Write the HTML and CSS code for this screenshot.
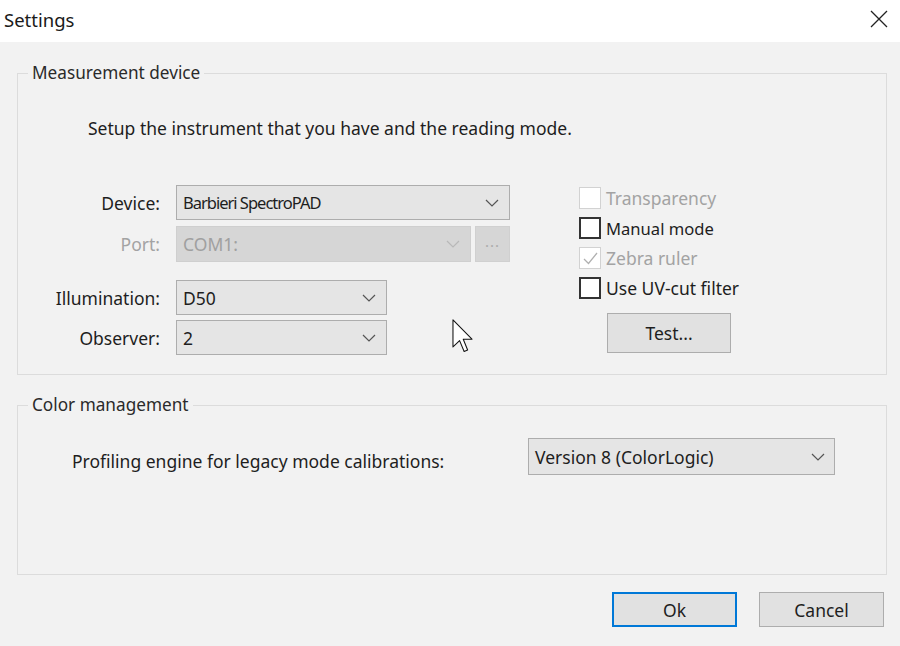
FILE: index.html
```html
<!DOCTYPE html>
<html lang="en">

<head>
  <meta charset="UTF-8" />
  <meta name="viewport" content="width=device-width, initial-scale=1.0" />
  <title>Settings</title>
  <link rel="stylesheet" href="styles.css">
</head>

<body>

  <div class="titlebar">
    <span class="title">Settings</span>
    <svg class="close" width="20" height="20" viewBox="0 0 20 20">
      <path d="M2 2 L18 18 M18 2 L2 18" stroke="#222" stroke-width="1.3" fill="none" />
    </svg>
  </div>

  <div class="content">

    <!-- Measurement device -->
    <fieldset class="group measure">
      <legend>Measurement device</legend>
      <p class="intro">Setup the instrument that you have and the reading mode.</p>

      <div class="device-row">
        <div class="form-grid">
          <label class="lbl">Device:</label>
          <div class="combo w-wide">
            <span class="narrow">Barbieri SpectroPAD</span>
            <svg class="chev" width="14" height="8" viewBox="0 0 14 8"><path d="M1 1 L7 7 L13 1" /></svg>
          </div>

          <label class="lbl disabled port-gap">Port:</label>
          <div class="port-row port-gap">
            <div class="combo w-port off">
              <span>COM1:</span>
              <svg class="chev" width="14" height="8" viewBox="0 0 14 8"><path d="M1 1 L7 7 L13 1" /></svg>
            </div>
            <button class="dots" disabled>...</button>
          </div>

          <label class="lbl gap-top">Illumination:</label>
          <div class="combo w-short gap-top">
            <span>D50</span>
            <svg class="chev" width="14" height="8" viewBox="0 0 14 8"><path d="M1 1 L7 7 L13 1" /></svg>
          </div>

          <label class="lbl tight">Observer:</label>
          <div class="combo w-short tight">
            <span>2</span>
            <svg class="chev" width="14" height="8" viewBox="0 0 14 8"><path d="M1 1 L7 7 L13 1" /></svg>
          </div>
        </div>

        <div class="options">
          <div class="check disabled"><span class="box"></span>Transparency</div>
          <div class="check"><span class="box"></span><span class="slim">Manual mode</span></div>
          <div class="check disabled">
            <span class="box">
              <svg width="19" height="19" viewBox="0 0 19 19"><path d="M3 10 L7.5 14.5 L16 4" stroke="#b0b0b0" stroke-width="1.3" fill="none" /></svg>
            </span>Zebra ruler
          </div>
          <div class="check"><span class="box"></span>Use UV-cut filter</div>
          <button class="btn test">Test...</button>
        </div>
      </div>

      <!-- mouse pointer over the dialog -->
      <svg class="cursor" width="22" height="34" viewBox="0 0 12.5 19.5">
        <path d="M0.5 0.5 L0.5 16 L4.3 12.4 L6.9 18.6 L8.9 17.8 L6.4 11.6 L11.4 11.6 Z"
          fill="#fff" stroke="#111" stroke-width="0.6" stroke-linejoin="round" />
      </svg>
    </fieldset>

    <!-- Color management -->
    <fieldset class="group color">
      <legend>Color management</legend>
      <div class="profile-row">
        <label class="lbl-profile">Profiling engine for legacy mode calibrations:</label>
        <div class="combo w-engine">
          <span>Version 8 (ColorLogic)</span>
          <svg class="chev" width="14" height="8" viewBox="0 0 14 8"><path d="M1 1 L7 7 L13 1" /></svg>
        </div>
      </div>
    </fieldset>

    <div class="actions">
      <button class="btn ok">Ok</button>
      <button class="btn">Cancel</button>
    </div>

  </div>

</body>

</html>
```

FILE: styles.css
```css
* {
  box-sizing: border-box;
}

body {
  margin: 0;
  font-family: "Noto Sans", "Open Sans", sans-serif;
  font-size: 17.5px;
  color: #1e1e1e;
  background-color: #f2f2f2;
  width: 900px;
  height: 646px;
  overflow: hidden;
}

/* barra de titulo */
.titlebar {
  height: 42px;
  background-color: #fff;
  display: flex;
  align-items: center;
  justify-content: space-between;
  padding: 0 11px 4px 4px;
}

.title {
  font-size: 18.5px;
  color: #1a1a1a;
}

.content {
  padding-top: 21px;
}

/* group boxes */
.group {
  position: relative;
  margin: 0 13px 0 17px;
  padding: 0;
  border: 1px solid #dcdcdc;
  min-width: 0;
}

.group legend {
  margin-left: 10px;
  padding: 0 4px;
  line-height: 20px;
  font-size: 17.2px;
  color: #2a2a2a;
}

.measure {
  padding-bottom: 19px;
}

.intro {
  margin: 34px 0 0 70px;
  line-height: 22px;
}

.device-row {
  display: flex;
  margin-top: 46px;
}

.form-grid {
  display: grid;
  grid-template-columns: 158px auto;
  align-items: center;
}

.lbl {
  text-align: right;
  padding-right: 16px;
}

.disabled {
  color: #a3a3a3;
}

.port-gap {
  margin-top: 6px;
}

.gap-top {
  margin-top: 18px;
}

.tight {
  margin-top: 5px;
}

.port-row {
  display: flex;
  gap: 4px;
}

/* combos */
.combo {
  height: 35px;
  background-color: #e5e5e5;
  border: 1px solid #adadad;
  display: flex;
  align-items: center;
  justify-content: space-between;
  padding: 0 10px 0 6px;
}

.combo.off {
  background-color: #d6d6d6;
  border-color: #cfcfcf;
  color: #a0a0a0;
}

.narrow {
  font-size: 16.5px;
  letter-spacing: -1px;
}

.slim {
  font-size: 16.6px;
}

.chev path {
  fill: none;
  stroke: #555;
  stroke-width: 1.2;
}

.off .chev path {
  stroke: #b8b8b8;
}

.w-wide {
  width: 334px;
}

.w-port {
  width: 295px;
  height: 36px;
}

.w-short {
  width: 211px;
}

.w-engine {
  width: 307px;
  height: 37px;
  padding-right: 9px;
}

.dots {
  width: 35px;
  height: 36px;
  margin: 0;
  padding: 0 0 6px;
  border: 1px solid #d0d0d0;
  background-color: #d6d6d6;
  color: #ababab;
  font-family: inherit;
  font-size: 15px;
  letter-spacing: 1px;
}

/* checkboxes */
.options {
  margin-left: 69px;
  margin-top: -2px;
  display: flex;
  flex-direction: column;
}

.check {
  height: 30px;
  display: flex;
  align-items: center;
  gap: 5px;
}

.box {
  width: 22px;
  height: 22px;
  border: 2px solid #333;
  background-color: #fff;
  display: flex;
  align-items: center;
  justify-content: center;
}

.check.disabled .box {
  border: 1px solid #d2d2d2;
}

.btn {
  height: 35px;
  width: 125px;
  margin: 0;
  border: 1px solid #adadad;
  background-color: #e1e1e1;
  font-family: inherit;
  font-size: 17.5px;
  color: #1e1e1e;
}

.test {
  margin: 10px 0 0 28px;
  width: 124px;
  height: 40px;
}

.cursor {
  position: absolute;
  left: 434px;
  top: 236px;
}

/* color management */
.color {
  margin-top: 20px;
  padding-bottom: 99px;
}

.profile-row {
  display: flex;
  align-items: center;
  margin-top: 23px;
  padding-left: 54px;
}

.lbl-profile {
  width: 456px;
  padding-top: 8px;
}

.actions {
  display: flex;
  justify-content: flex-end;
  gap: 22px;
  margin-top: 17px;
  padding-right: 16px;
}

.ok {
  border: 2px solid #0078d7;
}
```
